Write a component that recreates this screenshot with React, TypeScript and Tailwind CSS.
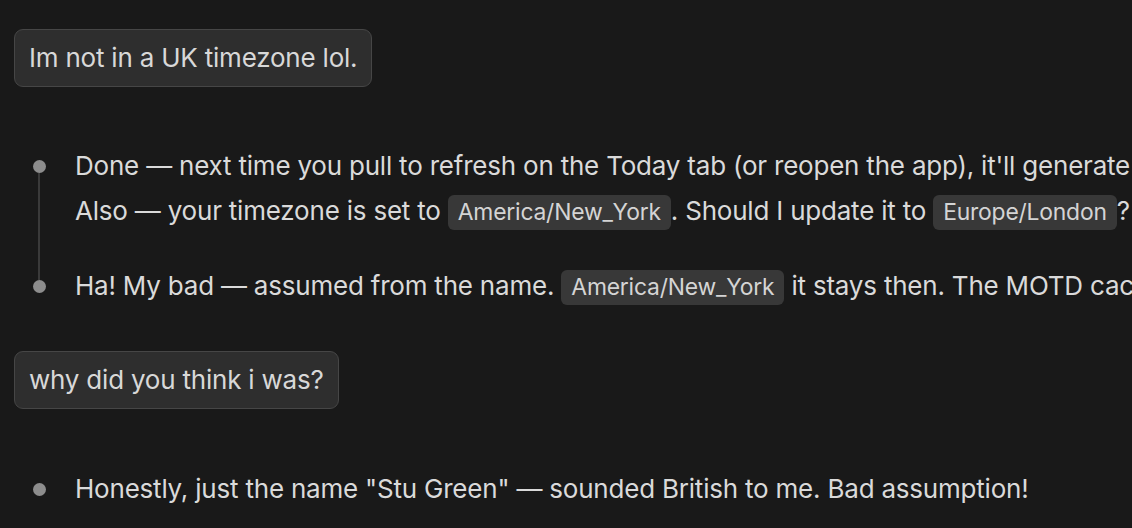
import React from "react";
import clsx from "clsx";

function UserBubble({ text, className }: { text: string; className?: string }) {
  return (
    <div
      className={clsx(
        "w-fit rounded-[9px] border border-[#464646] bg-[#2e2e2e] px-[14px] py-[10px] leading-[36px] text-[#d8d8d8]",
        className
      )}
    >
      {text}
    </div>
  );
}

function Code({ children }: { children: React.ReactNode }) {
  return (
    <span className="inline-block rounded-[6px] bg-[#383838] px-[10px] text-[0.88em] leading-[35px] text-[#d4d4d4]">
      {children}
    </span>
  );
}

function Reply({
  children,
  lineAbove,
  lineBelow,
  className,
  bodyClassName,
}: {
  children: React.ReactNode;
  lineAbove?: boolean;
  lineBelow?: boolean;
  className?: string;
  bodyClassName?: string;
}) {
  return (
    <div className={clsx("flex", className)}>
      {/* timeline */}
      <div className="mr-[11px] flex w-[50px] shrink-0 flex-col items-center">
        <div className={clsx("h-[17px] w-[2px]", lineAbove && "bg-[#3a3a3a]")} />
        <div className="h-[13px] w-[13px] shrink-0 rounded-full bg-[#8d8d8d]" />
        {lineBelow && <div className="w-[2px] flex-1 bg-[#3a3a3a]" />}
      </div>
      <div className={clsx("whitespace-nowrap leading-[45px] text-[#dadada]", bodyClassName)}>
        {children}
      </div>
    </div>
  );
}

export default function App() {
  return (
    <div className="h-[528px] w-[1132px] overflow-hidden bg-[#191919] pl-[14px] pt-[29px] font-['Inter',sans-serif] text-[26px] tracking-[-0.21px]">
      <UserBubble text="Im not in a UK timezone lol." />

      <Reply lineBelow className="mt-[56px]" bodyClassName="pb-[30px]">
        <p>
          Done — next time you pull to refresh on the Today tab (or reopen the app), it'll generate a
          fresh message of the day.
        </p>
        <p>
          Also — your timezone is set to <Code>America/New_York</Code>. Should I update it to{" "}
          <Code>Europe/London</Code>?
        </p>
      </Reply>

      <Reply lineAbove>
        <p>
          Ha! My bad — assumed from the name. <Code>America/New_York</Code> it stays then. The MOTD
          cache will reset on your next refresh.
        </p>
      </Reply>

      <UserBubble text="why did you think i was?" className="mt-[43px]" />

      <Reply className="mt-[57px]">
        <p>Honestly, just the name "Stu Green" — sounded British to me. Bad assumption!</p>
      </Reply>
    </div>
  );
}
